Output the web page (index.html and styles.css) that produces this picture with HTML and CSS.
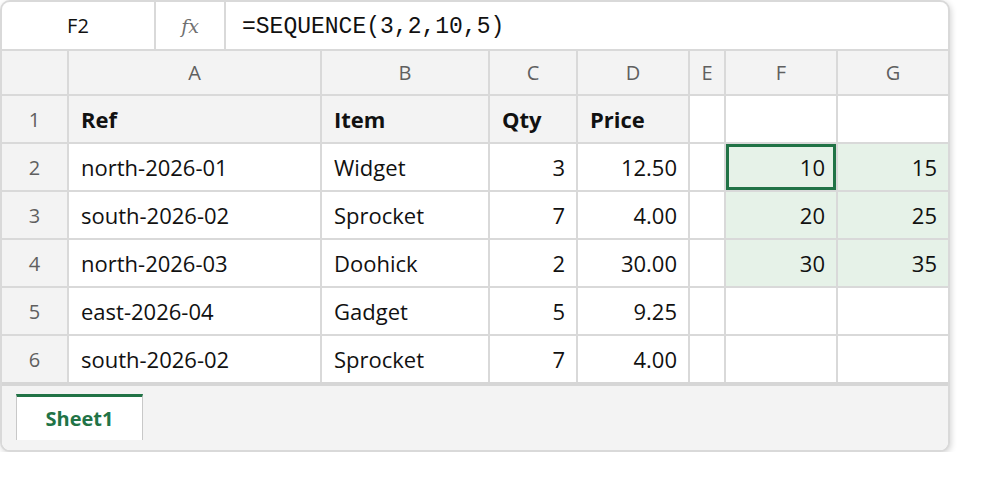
FILE: index.html
```html
<!DOCTYPE html>
<html lang="en">
<head>
  <meta charset="UTF-8" />
  <meta name="viewport" content="width=device-width, initial-scale=1.0"/>
  <title>sheet</title>
  <link rel="stylesheet" href="styles.css">
</head>
<body>
<div class="sheet">
  <div class="formula-bar">
    <div class="name-box">F2</div>
    <div class="fx">fx</div>
    <div class="formula">=SEQUENCE(3,2,10,5)</div>
  </div>

  <div class="grid">
    <!-- column headers -->
    <div class="col-head"></div>
    <div class="col-head">A</div>
    <div class="col-head">B</div>
    <div class="col-head">C</div>
    <div class="col-head">D</div>
    <div class="col-head">E</div>
    <div class="col-head">F</div>
    <div class="col-head">G</div>

    <!-- row 1 -->
    <div class="row-head">1</div>
    <div class="cell head">Ref</div>
    <div class="cell head">Item</div>
    <div class="cell head">Qty</div>
    <div class="cell head">Price</div>
    <div class="cell"></div>
    <div class="cell"></div>
    <div class="cell"></div>

    <!-- row 2 -->
    <div class="row-head">2</div>
    <div class="cell">north-2026-01</div>
    <div class="cell">Widget</div>
    <div class="cell num">3</div>
    <div class="cell num">12.50</div>
    <div class="cell"></div>
    <div class="cell num spill active">10</div>
    <div class="cell num spill">15</div>

    <!-- row 3 -->
    <div class="row-head">3</div>
    <div class="cell">south-2026-02</div>
    <div class="cell">Sprocket</div>
    <div class="cell num">7</div>
    <div class="cell num">4.00</div>
    <div class="cell"></div>
    <div class="cell num spill">20</div>
    <div class="cell num spill">25</div>

    <!-- row 4 -->
    <div class="row-head">4</div>
    <div class="cell">north-2026-03</div>
    <div class="cell">Doohick</div>
    <div class="cell num">2</div>
    <div class="cell num">30.00</div>
    <div class="cell"></div>
    <div class="cell num spill">30</div>
    <div class="cell num spill">35</div>

    <!-- row 5 -->
    <div class="row-head">5</div>
    <div class="cell">east-2026-04</div>
    <div class="cell">Gadget</div>
    <div class="cell num">5</div>
    <div class="cell num">9.25</div>
    <div class="cell"></div>
    <div class="cell"></div>
    <div class="cell"></div>

    <!-- row 6 -->
    <div class="row-head">6</div>
    <div class="cell">south-2026-02</div>
    <div class="cell">Sprocket</div>
    <div class="cell num">7</div>
    <div class="cell num">4.00</div>
    <div class="cell"></div>
    <div class="cell"></div>
    <div class="cell"></div>
  </div>

  <div class="tabs">
    <div class="tab">Sheet1</div>
  </div>
</div>
</body>
</html>
```

FILE: styles.css
```css
body {
  margin: 0;
  font-family: "Open Sans", "Noto Sans", sans-serif;
  background: #fff;
  color: #111;
}
.sheet {
  width: 950px;
  box-sizing: border-box;
  border: 2px solid #d9d9d9;
  border-radius: 10px;
  overflow: hidden;
  background: #fff;
  box-shadow: 1px 2px 6px rgba(0,0,0,0.18);
}
.formula-bar {
  display: grid;
  grid-template-columns: 152px 68px 1fr;
  gap: 2px;
  height: 47px;
  background: #d9d9d9;
  border-bottom: 2px solid #d9d9d9;
}
.formula-bar > div {
  background: #fff;
  display: flex;
  align-items: center;
}
.name-box {
  justify-content: center;
  font-size: 20px;
}
.fx {
  justify-content: center;
  font-family: "DejaVu Serif", serif;
  font-style: italic;
  font-size: 19px;
  color: #707070;
}
.formula {
  padding: 3px 0 0 16px;
  font-family: "Liberation Mono", monospace;
  font-size: 23px;
}
.grid {
  display: grid;
  grid-template-columns: 65px 251px 166px 86px 110px 34px 110px 110px;
  grid-template-rows: 43px repeat(6, 46px);
  gap: 2px;
  background: #d9d9d9;
}
.grid > div {
  display: flex;
  align-items: center;
  background: #fff;
  font-size: 22px;
}
.grid > .col-head,
.grid > .row-head {
  justify-content: center;
  background: #f3f3f3;
  color: #5f5f5f;
  font-size: 20px;
}
.grid > .cell {
  padding: 0 11px 0 12px;
}
.grid > .head {
  background: #f3f3f3;
  font-weight: bold;
}
.grid > .num {
  justify-content: flex-end;
}
.grid > .spill {
  background: #e6f2e8;
}
.grid > .active {
  box-shadow: inset 0 0 0 3px #217346;
}
.tabs {
  height: 68px;
  box-sizing: border-box;
  border-top: 4px solid #d6d6d6;
  background: #f3f3f3;
  padding: 8px 0 0 14px;
}
.tab {
  width: 127px;
  height: 46px;
  box-sizing: border-box;
  border: 1px solid #c8c8c8;
  border-top: 3px solid #217346;
  border-bottom: none;
  background: #fff;
  display: flex;
  align-items: center;
  justify-content: center;
  color: #217346;
  font-weight: bold;
  font-size: 20px;
}
```
